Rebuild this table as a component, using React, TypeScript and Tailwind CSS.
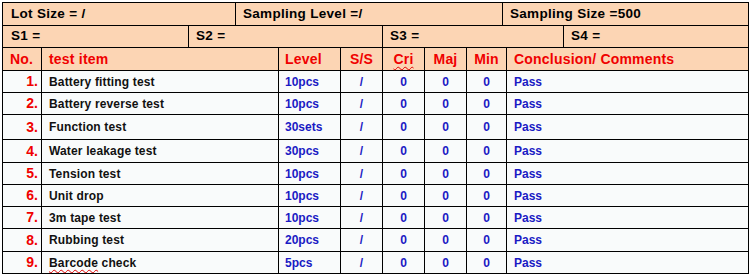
import React from "react";

const rows = [
  { no: "1.", item: "Battery fitting test", level: "10pcs", h: "h-[22px]" },
  { no: "2.", item: "Battery reverse test", level: "10pcs", h: "h-[22px]" },
  { no: "3.", item: "Function test", level: "30sets", h: "h-[25px]" },
  { no: "4.", item: "Water leakage test", level: "30pcs", h: "h-[23px]" },
  { no: "5.", item: "Tension test", level: "10pcs", h: "h-[22px]" },
  { no: "6.", item: "Unit drop", level: "10pcs", h: "h-[22px]" },
  { no: "7.", item: "3m tape test", level: "10pcs", h: "h-[22px]" },
  { no: "8.", item: "Rubbing test", level: "20pcs", h: "h-[23px]" },
  { no: "9.", item: "Barcode check", level: "5pcs", h: "h-[21px]", wavy: true },
];

const cols = "grid grid-cols-[39px_237px_62px_42px_42px_42px_40px_241px]";
const cell = "flex items-center border-r border-black";

export default function App() {
  return (
    <div className="min-h-screen bg-white pl-[2px] pt-[2px] font-['Liberation_Sans',Arial,sans-serif] font-bold">
      <div className="w-[747px] border border-black">
        <div className="grid h-[23px] grid-cols-[233px_267px_245px] border-b border-black bg-[#fcd5b4] text-[13.5px] tracking-[0.3px] text-black">
          <div className={`${cell} pl-[8px]`}>Lot Size = /</div>
          <div className={`${cell} pl-[7px]`}>Sampling Level =/</div>
          <div className="flex items-center pl-[7px]">Sampling Size =500</div>
        </div>

        <div className="grid h-[22px] grid-cols-[186px_194px_181px_184px] border-b border-black bg-[#fcd5b4] text-[13.5px] tracking-[0.3px] text-black">
          <div className={`${cell} pl-[8px]`}>S1 =</div>
          <div className={`${cell} pl-[7px]`}>S2 =</div>
          <div className={`${cell} pl-[7px]`}>S3 =</div>
          <div className="flex items-center pl-[7px]">S4 =</div>
        </div>

        <div className={`${cols} h-[23px] border-b border-black bg-[#fcd5b4] text-[14px] tracking-[0.2px] text-[#f00000]`}>
          <div className={`${cell} pl-[7px]`}>No.</div>
          <div className={`${cell} pl-[7px]`}>test item</div>
          <div className={`${cell} pl-[6px]`}>Level</div>
          <div className={`${cell} justify-center`}>S/S</div>
          <div className={`${cell} justify-center`}>
            <span className="underline decoration-[#e00000] decoration-wavy decoration-1 underline-offset-2">Cri</span>
          </div>
          <div className={`${cell} justify-center`}>Maj</div>
          <div className={`${cell} justify-center`}>Min</div>
          <div className="flex items-center pl-[7px]">Conclusion/ Comments</div>
        </div>

        {rows.map((r, i) => (
          <div
            key={r.no}
            className={`${cols} ${r.h} ${i < rows.length - 1 ? "border-b border-black" : ""} bg-[#f9fbfb] text-[12px] text-[#1a1ac4]`}
          >
            <div className={`${cell} justify-end pr-[3px] text-[14px] text-[#f00000]`}>{r.no}</div>
            <div className={`${cell} pl-[7px] tracking-[0.15px] text-[#111]`}>
              {r.wavy ? (
                <>
                  <span className="underline decoration-[#e00000] decoration-wavy decoration-1 underline-offset-2">Barcode</span>
                  &nbsp;check
                </>
              ) : (
                r.item
              )}
            </div>
            <div className={`${cell} pl-[6px]`}>{r.level}</div>
            <div className={`${cell} justify-center`}>/</div>
            <div className={`${cell} justify-center`}>0</div>
            <div className={`${cell} justify-center`}>0</div>
            <div className={`${cell} justify-center`}>0</div>
            <div className="flex items-center pl-[7px]">Pass</div>
          </div>
        ))}
      </div>
    </div>
  );
}
